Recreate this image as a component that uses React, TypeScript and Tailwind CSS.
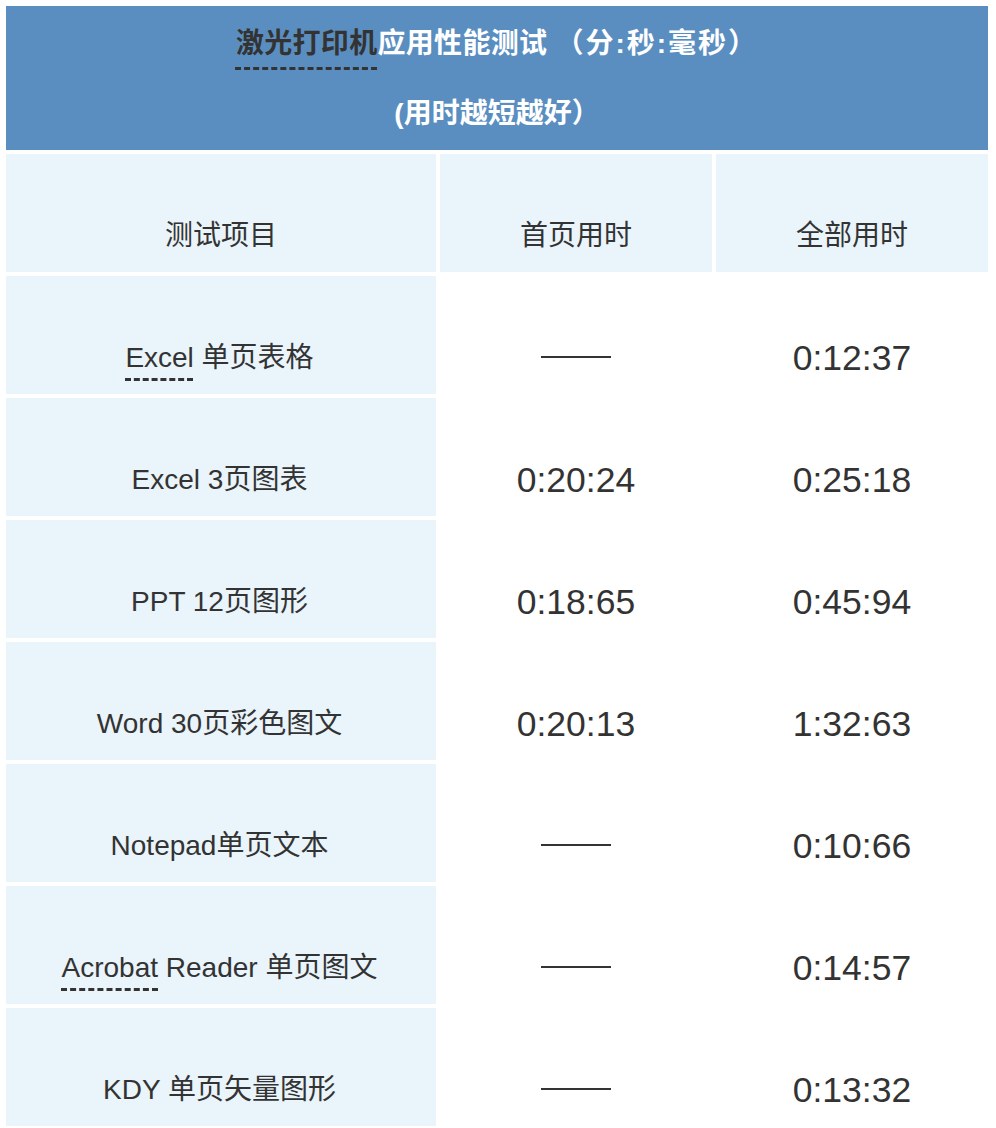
const rows: { name: string; link?: string; first: string; total: string }[] = [
  { name: ' 单页表格', link: 'Excel', first: '——', total: '0:12:37' },
  { name: 'Excel 3页图表', first: '0:20:24', total: '0:25:18' },
  { name: 'PPT 12页图形', first: '0:18:65', total: '0:45:94' },
  { name: 'Word 30页彩色图文', first: '0:20:13', total: '1:32:63' },
  { name: 'Notepad单页文本', first: '——', total: '0:10:66' },
  { name: ' Reader 单页图文', link: 'Acrobat', first: '——', total: '0:14:57' },
  { name: 'KDY 单页矢量图形', first: '——', total: '0:13:32' },
];

const font = "font-['Liberation_Sans','Noto_Sans_CJK_SC',sans-serif]";

function Cell({ children, shaded, big }: { children: React.ReactNode; shaded?: boolean; big?: boolean }) {
  return (
    <div
      className={`h-[118px] pt-[46px] flex items-center justify-center text-[#333] ${
        shaded ? 'bg-[#eaf4fb]' : ''
      } ${big ? 'text-[35.5px] leading-[42px]' : 'text-[28px] leading-[42px]'}`}
    >
      {children}
    </div>
  );
}

// long dash used for "no value"
function Dash() {
  return <div role="img" aria-label="——" className="w-[70px] h-[2px] bg-[#333] mb-[3px]" />;
}

export default function App() {
  return (
    <div className={`w-[996px] h-[1128px] bg-white pt-[6px] pl-[6px] ${font}`}>
      <div className="w-[982px] flex flex-col gap-[4px]">
        <div className="h-[144px] bg-[#5a8ec0] pt-[17px] flex flex-col items-center gap-[28px] font-bold text-[28px] leading-[42px] text-white">
          <p className="tracking-[0.3px]">
            <span className="text-[#333] underline decoration-dashed decoration-[#333] underline-offset-[14px]">激光打印机</span>
            应用性能测试 <span className="tracking-[2px]">（分:秒:毫秒）</span>
          </p>
          <p>(用时越短越好）</p>
        </div>

        <div className="grid grid-cols-[430px_272px_272px] gap-[4px]">
          <Cell shaded>测试项目</Cell>
          <Cell shaded>首页用时</Cell>
          <Cell shaded>全部用时</Cell>

          {rows.map((r) => (
            <div key={r.name + r.total} className="contents">
              <Cell shaded>
                <span className="whitespace-pre -ml-[3px]">
                  {r.link && (
                    <span className="underline decoration-dashed decoration-[#333] underline-offset-[11px]">{r.link}</span>
                  )}
                  {r.name}
                </span>
              </Cell>
              <Cell big>{r.first === '——' ? <Dash /> : r.first}</Cell>
              <Cell big>{r.total}</Cell>
            </div>
          ))}
        </div>
      </div>
    </div>
  );
}
